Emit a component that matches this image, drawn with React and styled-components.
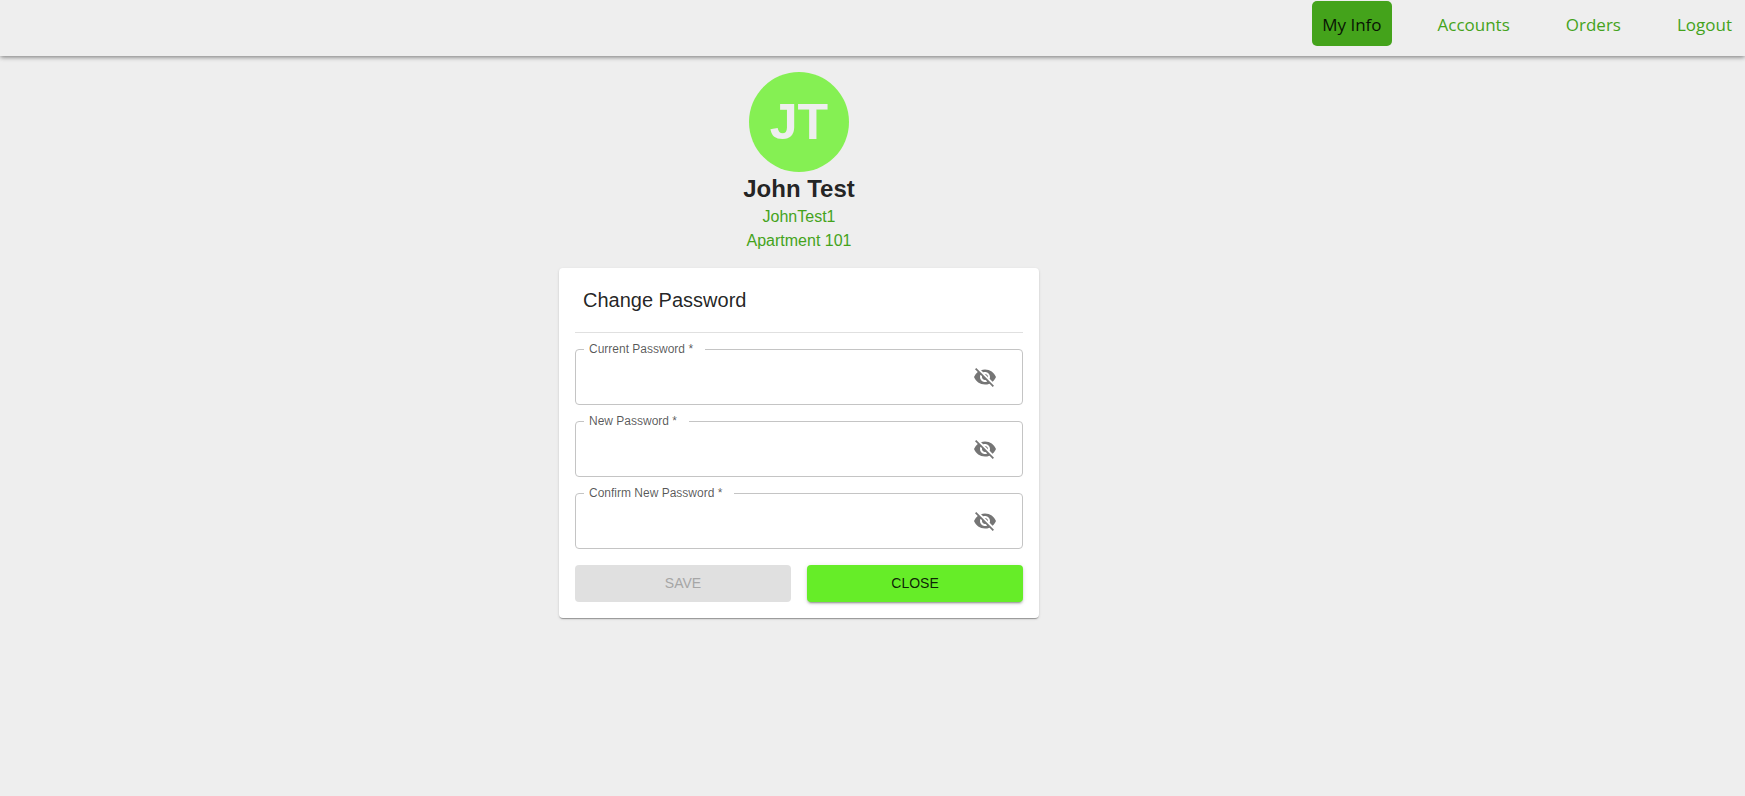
import React, { useState } from 'react';
import styled, { createGlobalStyle } from 'styled-components';
import { MdVisibility, MdVisibilityOff } from 'react-icons/md';

const GlobalStyle = createGlobalStyle`
* {
  box-sizing: border-box;
}

body {
  margin: 0;
  background-color: #eeeeee;
  color: rgba(0, 0, 0, 0.87);
  font-family: "Liberation Sans", Arial, sans-serif;
}
`;

const Header = styled.header`
display: flex;
justify-content: flex-end;
height: 56px;
padding: 1px 3px 0;
box-shadow: 0 2px 4px -1px rgba(0, 0, 0, 0.25), 0 1px 5px rgba(0, 0, 0, 0.3);
background-color: #eeeeee;
`;

const Nav = styled.nav`
display: flex;
gap: 36px;
height: 45px;
`;

const NavLink = styled.a`
display: flex;
align-items: center;
padding: 2px 10px 0;
border-radius: 5px;
background-color: ${(props) => (props.$active ? '#44a31b' : 'transparent')};
color: ${(props) => (props.$active ? '#091404' : '#44a31b')};
font-family: "Open Sans", "Segoe UI", sans-serif;
font-size: 17px;
line-height: 24px;
text-decoration: none;
`;

const Main = styled.main`
display: flex;
flex-direction: column;
align-items: center;
gap: 15px;
padding: 16px 147px 16px 0;
`;

const Profile = styled.section`
display: flex;
flex-direction: column;
align-items: center;
`;

const Avatar = styled.div`
display: flex;
align-items: center;
justify-content: center;
width: 100px;
height: 100px;
margin-bottom: 1px;
border-radius: 50%;
background-color: #85f053;
color: #eeeeee;
font-size: 50px;
font-weight: bold;
`;

const Name = styled.h1`
margin: 0;
font-size: 24px;
line-height: 32px;
`;

const Detail = styled.p`
margin: 0;
color: #44a31b;
font-size: 16px;
line-height: 24px;
`;

const Card = styled.form`
display: flex;
flex-direction: column;
gap: 16px;
width: 100%;
max-width: 480px;
padding: 16px;
border-radius: 4px;
background-color: #ffffff;
box-shadow: 0 2px 1px -1px rgba(0, 0, 0, 0.2), 0 1px 1px rgba(0, 0, 0, 0.14), 0 1px 3px rgba(0, 0, 0, 0.12);
`;

const CardTitle = styled.h2`
margin: 0;
padding: 0 8px 16px;
border-bottom: 1px solid #e0e0e0;
font-size: 20px;
font-weight: normal;
line-height: 32px;
`;

const Field = styled.div`
position: relative;
display: flex;
align-items: center;
height: 56px;
padding-right: 14px;
border: 1px solid #c4c4c4;
border-radius: 4px;
`;

//label sits over the top border and hides part of it
const Label = styled.label`
position: absolute;
top: -7px;
left: 8px;
padding: 0 12px 0 5px;
background-color: #ffffff;
color: rgba(0, 0, 0, 0.66);
font-size: 12px;
line-height: 12px;
`;

const Input = styled.input`
flex: 1;
min-width: 0;
height: 100%;
padding: 0 14px;
border: none;
outline: none;
background: transparent;
font-family: inherit;
font-size: 16px;
`;

const IconButton = styled.button`
display: flex;
padding: 12px;
margin-right: -1px;
border: none;
background: transparent;
color: #757575;
font-size: 24px;
cursor: pointer;
`;

const Actions = styled.div`
display: grid;
grid-template-columns: 1fr 1fr;
gap: 16px;
`;

const Button = styled.button`
padding: 6px 16px 7px;
border: none;
border-radius: 4px;
background-color: #66ed28;
box-shadow: 0 3px 1px -2px rgba(0, 0, 0, 0.2), 0 2px 2px rgba(0, 0, 0, 0.14), 0 1px 5px rgba(0, 0, 0, 0.12);
color: rgba(0, 0, 0, 0.87);
font-family: inherit;
font-size: 14px;
line-height: 24px;
text-transform: uppercase;
cursor: pointer;

&:disabled {
  background-color: #e0e0e0;
  box-shadow: none;
  color: #a6a6a6;
  cursor: default;
}
`;

const links = ['My Info', 'Accounts', 'Orders', 'Logout'];

const fields = [
    { id: 'current', label: 'Current Password' },
    { id: 'new', label: 'New Password' },
    { id: 'confirm', label: 'Confirm New Password' },
];

const PasswordField = ({ id, label, value, onChange }) => {
    const [visible, setVisible] = useState(false);

    return (
        <Field>
            <Label htmlFor={id}>{label} *</Label>
            <Input
                id={id}
                type={visible ? 'text' : 'password'}
                value={value}
                onChange={(e) => onChange(e.target.value)}
                required
            />
            <IconButton type="button" aria-label="Toggle password visibility" onClick={() => setVisible(!visible)}>
                {visible ? <MdVisibility /> : <MdVisibilityOff />}
            </IconButton>
        </Field>
    );
};

const App = () => {
    const [values, setValues] = useState({ current: '', new: '', confirm: '' });

    //save only when everything is filled and the new passwords are equal
    const canSave = values.current !== '' && values.new !== '' && values.new === values.confirm;

    return (
        <>
            <GlobalStyle />
            <Header>
                <Nav>
                    {links.map((link) => (
                        <NavLink key={link} href="#" $active={link === 'My Info'}>{link}</NavLink>
                    ))}
                </Nav>
            </Header>
            <Main>
                <Profile>
                    <Avatar>JT</Avatar>
                    <Name>John Test</Name>
                    <Detail>JohnTest1</Detail>
                    <Detail>Apartment 101</Detail>
                </Profile>
                <Card onSubmit={(e) => e.preventDefault()}>
                    <CardTitle>Change Password</CardTitle>
                    {fields.map((field) => (
                        <PasswordField
                            key={field.id}
                            id={field.id}
                            label={field.label}
                            value={values[field.id]}
                            onChange={(value) => setValues({ ...values, [field.id]: value })}
                        />
                    ))}
                    <Actions>
                        <Button type="submit" disabled={!canSave}>Save</Button>
                        <Button type="button">Close</Button>
                    </Actions>
                </Card>
            </Main>
        </>
    );
};

export default App;
